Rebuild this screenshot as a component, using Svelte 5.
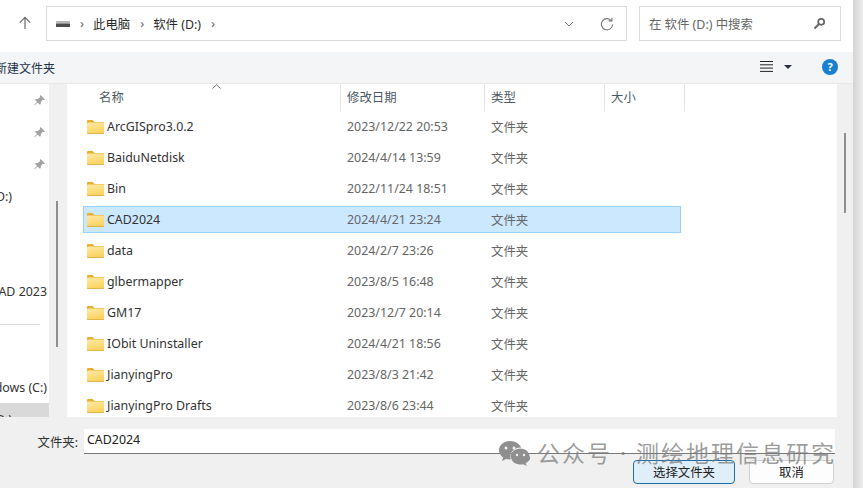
<script lang="ts">
  const folders = [
    { name: 'ArcGISpro3.0.2', date: '2023/12/22 20:53' },
    { name: 'BaiduNetdisk', date: '2024/4/14 13:59' },
    { name: 'Bin', date: '2022/11/24 18:51' },
    { name: 'CAD2024', date: '2024/4/21 23:24', selected: true },
    { name: 'data', date: '2024/2/7 23:26' },
    { name: 'glbermapper', date: '2023/8/5 16:48' },
    { name: 'GM17', date: '2023/12/7 20:14' },
    { name: 'IObit Uninstaller', date: '2024/4/21 18:56' },
    { name: 'JianyingPro', date: '2023/8/3 21:42' },
    { name: 'JianyingPro Drafts', date: '2023/8/6 23:44' }
  ];
  const pins = [0, 1, 2];
</script>

<div class="screen">
  <div class="dialog">
    <div class="topbar">
      <svg class="up" width="16" height="16" viewBox="0 0 16 16" fill="none" stroke="#6b6b6b" stroke-width="1.2">
        <path d="M8 14V2.5M2.8 7.6 8 2.4l5.2 5.2" />
      </svg>
      <div class="address">
        <svg class="drive" width="14" height="6" viewBox="0 0 14 6">
          <rect y="0" width="14" height="2.5" fill="#b9b9b9" />
          <rect y="2.5" width="14" height="3.5" rx="0.5" fill="#4c4c4c" />
        </svg>
        <span class="chev">›</span>
        <span class="crumb">此电脑</span>
        <span class="chev">›</span>
        <span class="crumb">软件 (D:)</span>
        <span class="chev">›</span>
        <span class="grow"></span>
        <svg width="10" height="6" viewBox="0 0 10 6" fill="none" stroke="#777" stroke-width="1">
          <path d="M1 1l4 4 4-4" />
        </svg>
        <svg class="refresh" width="14" height="14" viewBox="0 0 14 14" fill="none" stroke="#777" stroke-width="1.1">
          <path d="M11.6 4A5.6 5.6 0 1 0 12.6 7.4" />
          <path d="M8.6 3.9h3.3V.7" />
        </svg>
      </div>
      <div class="search">
        <span>在 软件 (D:) 中搜索</span>
        <svg width="13" height="13" viewBox="0 0 13 13" fill="none" stroke="#666">
          <circle cx="8.2" cy="4.8" r="3" stroke-width="1.7" />
          <path d="M6 7 1.5 11.5" stroke-width="2" />
        </svg>
      </div>
    </div>

    <div class="toolbar">
      <span class="new-folder">新建文件夹</span>
      <span class="grow"></span>
      <svg width="13" height="11" viewBox="0 0 13 11" stroke="#222" stroke-width="1">
        <path d="M0 .5h13M0 3.8h13M0 7.1h13M0 10.4h13" />
      </svg>
      <span class="caret"></span>
      <span class="help">?</span>
    </div>

    <div class="body">
      <nav class="sidebar">
        {#each pins as pin (pin)}
          <div class="nav-row pin-row">
            <svg width="13" height="13" viewBox="0 0 13 13" fill="#a3a3a3">
              <path d="M7.6 1 12 5.400 10.900 6.100 9.800 5.800 7.800 8 7.800 10 6.900 10.800 4.600 8.500 1.800 11.300 1.200 10.700 4 7.900 2 5.800 2.800 5 4.900 5 7.100 3 6.900 2z" />
            </svg>
          </div>
        {/each}
        <div class="nav-row early"><span>软件 (D:)</span></div>
        <div class="nav-row"></div>
        <div class="nav-row short"></div>
        <div class="nav-row cad"><span>CAD 2023</span></div>
        <div class="nav-sep"></div>
        <div class="nav-row windows"><span>Windows (C:)</span></div>
        <div class="nav-row current"><span>软件 (D:)</span></div>
      </nav>
      <div class="side-track"><div class="side-thumb"></div></div>

      <section class="list">
        <div class="list-head">
          <div class="col name">名称
            <svg class="sort" width="9" height="5" viewBox="0 0 9 5" fill="none" stroke="#777" stroke-width="1">
              <path d="M.5 4.500 4.500.8l4 3.700" />
            </svg>
          </div>
          <div class="col date">修改日期</div>
          <div class="col type">类型</div>
          <div class="col size">大小</div>
        </div>
        <div class="rows">
          {#each folders as folder (folder.name)}
            <div class="row" class:selected={folder.selected}>
              <svg class="folder" width="17" height="15" viewBox="0 0 17 15">
                <path d="M0 2a1 1 0 0 1 1-1h4.500l2 2H16a1 1 0 0 1 1 1v2H0z" fill="#e9ae2e" />
                <rect y="3.600" width="17" height="11.400" rx="1" fill="url(#folder-fill)" />
                <rect y="13.900" width="17" height="1.100" rx="0.500" fill="#e4b44a" />
              </svg>
              <span class="file-name">{folder.name}</span>
              <span class="file-date">{folder.date}</span>
              <span class="file-type">文件夹</span>
            </div>
          {/each}
        </div>
      </section>

      <div class="list-track"><div class="list-thumb"></div></div>
    </div>

    <div class="footer">
      <div class="name-line">
        <label for="folder-name">文件夹:</label>
        <input id="folder-name" value="CAD2024" />
      </div>
      <div class="actions">
        <button class="primary">选择文件夹</button>
        <button class="cancel">取消</button>
      </div>
    </div>
  </div>
  <div class="edge"></div>

  <svg class="defs" width="0" height="0">
    <defs>
      <linearGradient id="folder-fill" x1="0" y1="0" x2="0.3" y2="1">
        <stop offset="0" stop-color="#fdeaa6" />
        <stop offset="1" stop-color="#fbd25f" />
      </linearGradient>
    </defs>
  </svg>

  <div class="watermark">
    <svg width="32" height="30" viewBox="0 0 32 30" fill="#8f8f8f">
      <path d="M12 1C5.800 1 1 5.100 1 10.300c0 3 1.600 5.500 4.100 7.200L4 21l4-2.100c1.200.3 2.500.5 3.800.5.300 0 .700 0 1-.1-.3-.9-.4-1.800-.4-2.700 0-5 4.600-9 10.300-9h.7C21.300 3.800 17 1 12 1z" />
      <path d="M31.500 16.600c0-4.400-4.200-8-9.300-8s-9.300 3.600-9.300 8 4.200 8 9.300 8c1 0 2-.1 3-.4l3.400 1.900-.9-3c2.800-1.500 4.800-3.700 4.800-6.500z" />
      <circle cx="8" cy="8" r="1.500" fill="#f0f0f0" />
      <circle cx="16" cy="8" r="1.500" fill="#f0f0f0" />
      <circle cx="19" cy="15" r="1.200" fill="#f0f0f0" />
      <circle cx="26" cy="15" r="1.200" fill="#f0f0f0" />
    </svg>
    <span>公众号 · 测绘地理信息研究</span>
  </div>
</div>

<style>
  :global(body) {
    margin: 0;
  }

  .screen {
    position: relative;
    display: flex;
    width: 863px;
    height: 488px;
    overflow: hidden;
    font-family: 'Noto Sans', 'Noto Sans CJK SC', sans-serif;
    font-size: 12.4px;
    color: #333;
    background: #f0f0f0;
  }

  .defs {
    position: absolute;
  }

  .dialog {
    display: flex;
    flex-direction: column;
    width: 853px;
    min-width: 0;
  }

  .edge {
    flex: 1;
    background: linear-gradient(90deg, #d4d4d4, #ececec);
  }

  .grow {
    flex: 1;
  }

  .topbar {
    display: flex;
    align-items: flex-start;
    flex: none;
    box-sizing: border-box;
    height: 52px;
    padding: 6px 0 0 17px;
    background: #fff;
  }

  .up {
    flex: none;
    margin: 9px 13px 0 0;
  }

  .address,
  .search {
    display: flex;
    align-items: center;
    box-sizing: border-box;
    height: 35px;
    background: #fff;
    border: 1px solid #d9d9d9;
  }

  .address {
    width: 581px;
    padding: 0 12px 0 9px;
  }

  .drive {
    flex: none;
  }

  .chev {
    margin: -2px 9px 0 10px;
    font-size: 13px;
    color: #666;
  }

  .crumb {
    color: #2a2a2a;
  }

  .refresh {
    margin-left: 26px;
  }

  .search {
    justify-content: space-between;
    width: 202px;
    margin-left: 12px;
    padding: 0 14px 0 9px;
    color: #666;
  }

  .toolbar {
    display: flex;
    align-items: center;
    flex: none;
    box-sizing: border-box;
    height: 32px;
    padding: 0 15px 2px 0;
    background: #f3f5f7;
    border-bottom: 1px solid #e9e9e9;
  }

  .new-folder {
    margin: 2px 0 0 -5px;
    font-size: 12px;
    color: #1f3347;
  }

  .caret {
    width: 0;
    height: 0;
    margin: 0 30px 0 11px;
    border-style: solid;
    border-width: 4px 4px 0;
    border-color: #2b2f45 transparent transparent;
  }

  .help {
    display: flex;
    align-items: center;
    justify-content: center;
    width: 16px;
    height: 16px;
    border-radius: 50%;
    background: #1a7fd0;
    color: #fff;
    font-size: 11px;
    font-weight: 700;
  }

  .body {
    display: flex;
    flex: none;
    height: 333px;
    overflow: hidden;
  }

  .sidebar {
    flex: none;
    width: 49px;
    overflow: hidden;
    background: #fff;
  }

  .nav-row {
    display: flex;
    align-items: center;
    justify-content: flex-end;
    height: 32px;
    white-space: nowrap;
  }

  .nav-row span {
    flex: none;
  }

  .short {
    height: 31px;
  }

  .pin-row {
    padding-right: 3px;
  }

  .early {
    padding-right: 37px;
  }

  .cad,
  .windows {
    padding-right: 2px;
  }

  .nav-sep {
    width: 40px;
    height: 1px;
    margin-top: 17px;
    background: #dcdcdc;
  }

  .windows {
    margin-top: 46px;
  }

  .current {
    padding-right: 37px;
    background: #d9d9d9;
  }

  .side-track {
    flex: none;
    position: relative;
    width: 18px;
    background: #f0f0f0;
  }

  .side-thumb {
    position: absolute;
    left: 7px;
    top: 117px;
    width: 2px;
    height: 146px;
    background: #8e8e8e;
  }

  .list {
    flex: none;
    width: 770px;
    background: #fff;
    overflow: hidden;
  }

  .list-head {
    display: flex;
    height: 27px;
    color: #4d5a66;
  }

  .col {
    position: relative;
    box-sizing: border-box;
    padding: 4px 0 0 6px;
    border-right: 1px solid #e5e5e5;
  }

  .name {
    width: 274px;
    padding-left: 32px;
  }

  .date {
    width: 144px;
  }

  .type {
    width: 120px;
  }

  .size {
    width: 80px;
  }

  .sort {
    position: absolute;
    left: 145px;
    top: 0;
  }

  .rows {
    padding: 2px 0 0 16px;
  }

  .row {
    display: flex;
    align-items: center;
    box-sizing: border-box;
    width: 598px;
    height: 27px;
    margin-bottom: 4px;
    padding-left: 3px;
    border: 1px solid transparent;
  }

  .selected {
    background: #cce8ff;
    border-color: #99d1ff;
  }

  .folder {
    flex: none;
  }

  .file-name {
    width: 240px;
    margin-left: 3px;
    color: #333;
  }

  .file-date {
    width: 144px;
    color: #666;
  }

  .file-type {
    color: #666;
  }

  .list-track {
    flex: none;
    position: relative;
    width: 16px;
    background: #f0f0f0;
  }

  .list-thumb {
    position: absolute;
    left: 7px;
    top: 49px;
    width: 2px;
    height: 80px;
    background: #8e8e8e;
  }

  .footer {
    flex: 1;
    padding: 12px 18px 0 0;
    background: #f0f0f0;
  }

  .name-line {
    display: flex;
    align-items: center;
    height: 25px;
  }

  label {
    width: 78px;
    margin-right: 6px;
    text-align: right;
  }

  input {
    flex: 1;
    box-sizing: border-box;
    height: 25px;
    padding: 0 3px 3px;
    border: 0;
    border-bottom: 1px solid #7a7a7a;
    background: #fff;
    font: inherit;
    color: #222;
    outline: none;
  }

  .actions {
    display: flex;
    justify-content: flex-end;
    gap: 14px;
    margin-top: 6px;
  }

  button {
    box-sizing: border-box;
    height: 24px;
    padding: 0;
    border-radius: 4px;
    font: inherit;
    color: #222;
  }

  .primary {
    width: 102px;
    background: #e0eef9;
    border: 1px solid #1c6ea4;
  }

  .cancel {
    width: 85px;
    margin-right: 1px;
    background: #fdfdfd;
    border: 1px solid #d0d0d0;
  }

  .watermark {
    position: absolute;
    left: 498px;
    top: 440px;
    display: flex;
    align-items: flex-start;
    gap: 7px;
    color: rgba(120, 120, 120, 0.72);
    font-size: 23px;
    line-height: 26px;
    letter-spacing: 2px;
    white-space: nowrap;
    pointer-events: none;
  }
</style>
